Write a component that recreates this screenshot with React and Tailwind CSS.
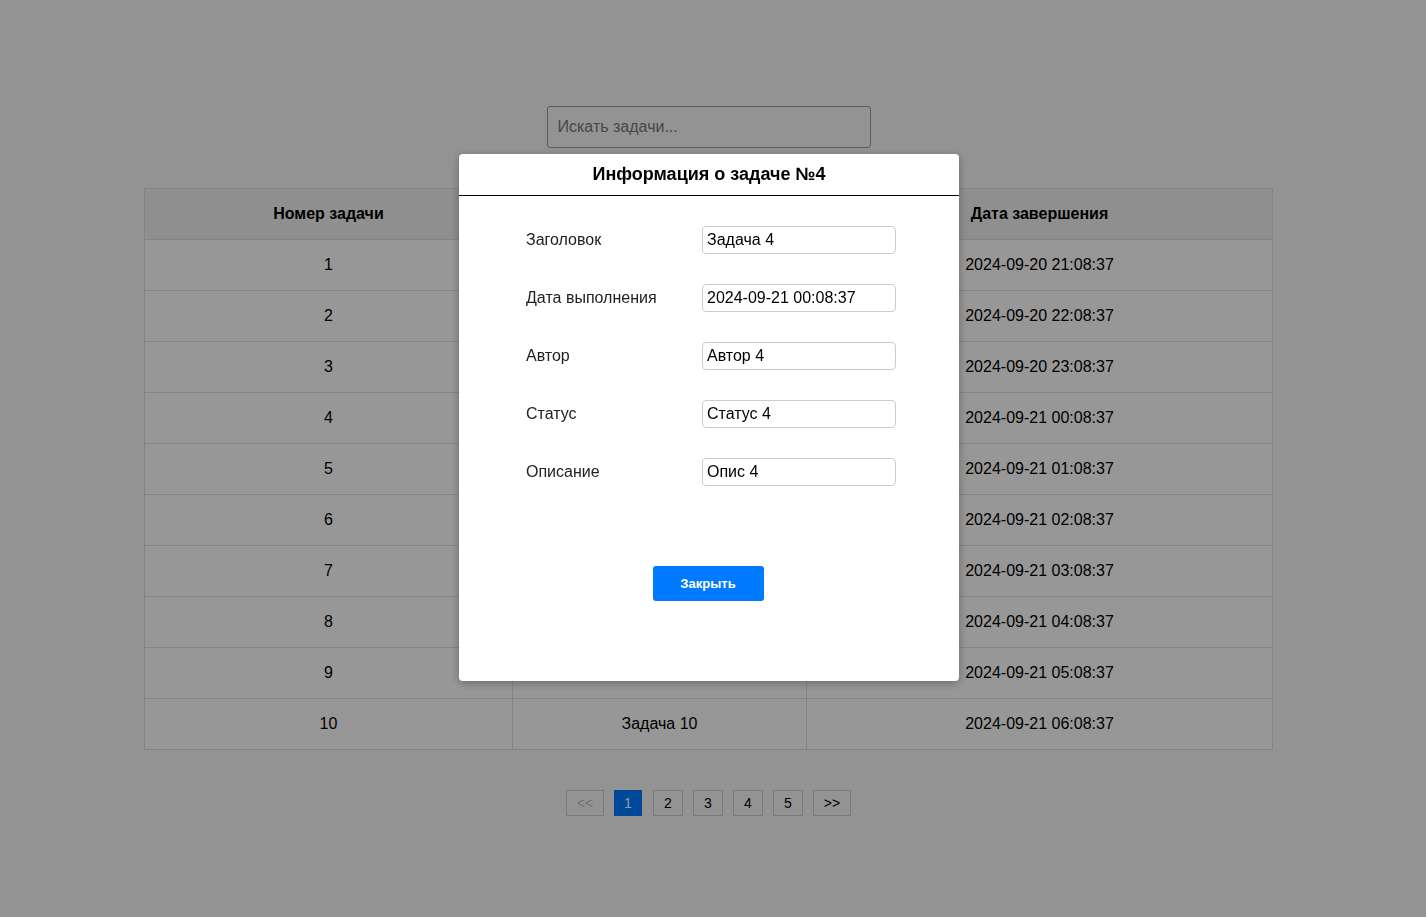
import React from "react";

const rows = [
  [1, "Задача 1", "2024-09-20 21:08:37"],
  [2, "Задача 2", "2024-09-20 22:08:37"],
  [3, "Задача 3", "2024-09-20 23:08:37"],
  [4, "Задача 4", "2024-09-21 00:08:37"],
  [5, "Задача 5", "2024-09-21 01:08:37"],
  [6, "Задача 6", "2024-09-21 02:08:37"],
  [7, "Задача 7", "2024-09-21 03:08:37"],
  [8, "Задача 8", "2024-09-21 04:08:37"],
  [9, "Задача 9", "2024-09-21 05:08:37"],
  [10, "Задача 10", "2024-09-21 06:08:37"],
];

const fields = [
  ["Заголовок", "Задача 4"],
  ["Дата выполнения", "2024-09-21 00:08:37"],
  ["Автор", "Автор 4"],
  ["Статус", "Статус 4"],
  ["Описание", "Опис 4"],
];

export default function App() {
  return (
    <div
      className="relative min-h-[917px] w-full bg-[#f6f6f6] text-black"
      style={{ fontFamily: '"Liberation Sans", Arial, sans-serif' }}
    >
      <div className="flex flex-col items-center pt-[106px] pr-[9px]">
        <input
          className="h-[42px] w-[324px] rounded-[3px] border border-[#999] bg-[#f6f6f6] px-[10px] text-[16px] placeholder-[#757575] outline-none"
          placeholder="Искать задачи..."
        />
        <table className="mt-[40px] w-[1129px] border-collapse text-[16px]">
          <thead>
            <tr className="h-[51px] bg-[#eeeeee]">
              <th className="w-[368px] border border-[#dddddd] font-bold">Номер задачи</th>
              <th className="w-[294px] border border-[#dddddd] font-bold">Заголовок</th>
              <th className="border border-[#dddddd] font-bold">Дата завершения</th>
            </tr>
          </thead>
          <tbody>
            {rows.map((r) => (
              <tr key={r[0]} className="h-[51px] bg-[#fcfcfc]">
                <td className="border border-[#dddddd] text-center">{r[0]}</td>
                <td className="border border-[#dddddd] text-center">{r[1]}</td>
                <td className="border border-[#dddddd] text-center">{r[2]}</td>
              </tr>
            ))}
          </tbody>
        </table>
        <div className="mt-[40px] flex items-center gap-[10px] text-[14px]">
          <button className="h-[26px] w-[38px] border border-[#cccccc] bg-[#f6f6f6] text-[#bbbbbb]">&lt;&lt;</button>
          <button className="h-[26px] w-[28px] border border-[#007bff] bg-[#007bff] text-white">1</button>
          <button className="ml-[1px] h-[26px] w-[30px] border border-[#cccccc] bg-[#f6f6f6]">2</button>
          <button className="h-[26px] w-[30px] border border-[#cccccc] bg-[#f6f6f6]">3</button>
          <button className="h-[26px] w-[30px] border border-[#cccccc] bg-[#f6f6f6]">4</button>
          <button className="h-[26px] w-[30px] border border-[#cccccc] bg-[#f6f6f6]">5</button>
          <button className="h-[26px] w-[38px] border border-[#cccccc] bg-[#f6f6f6]">&gt;&gt;</button>
        </div>
      </div>

      <div className="fixed inset-0 flex justify-center bg-[rgba(0,0,0,0.4)] pt-[154px] pr-[8px]">
        <div className="h-[527px] w-[500px] rounded-[4px] bg-white shadow-[0_2px_10px_rgba(0,0,0,0.3)]">
          <div className="flex h-[42px] items-center justify-center border-b border-black">
            <h2 className="text-[18px] font-bold">Информация о задаче №4</h2>
          </div>
          <div className="flex flex-col gap-[30px] pl-[67px] pt-[30px]">
            {fields.map(([label, value]) => (
              <div key={label} className="flex items-center">
                <span className="w-[176px] text-[16px] text-[#222]">{label}</span>
                <input
                  readOnly
                  value={value}
                  className="h-[28px] w-[194px] rounded-[4px] border border-[#cccccc] px-[4px] text-[16px] text-black outline-none"
                />
              </div>
            ))}
          </div>
          <div className="flex justify-center pt-[80px] pr-[2px]">
            <button className="h-[35px] w-[111px] rounded-[3px] bg-[#007bff] text-[13px] font-semibold text-white">
              Закрыть
            </button>
          </div>
        </div>
      </div>
    </div>
  );
}
